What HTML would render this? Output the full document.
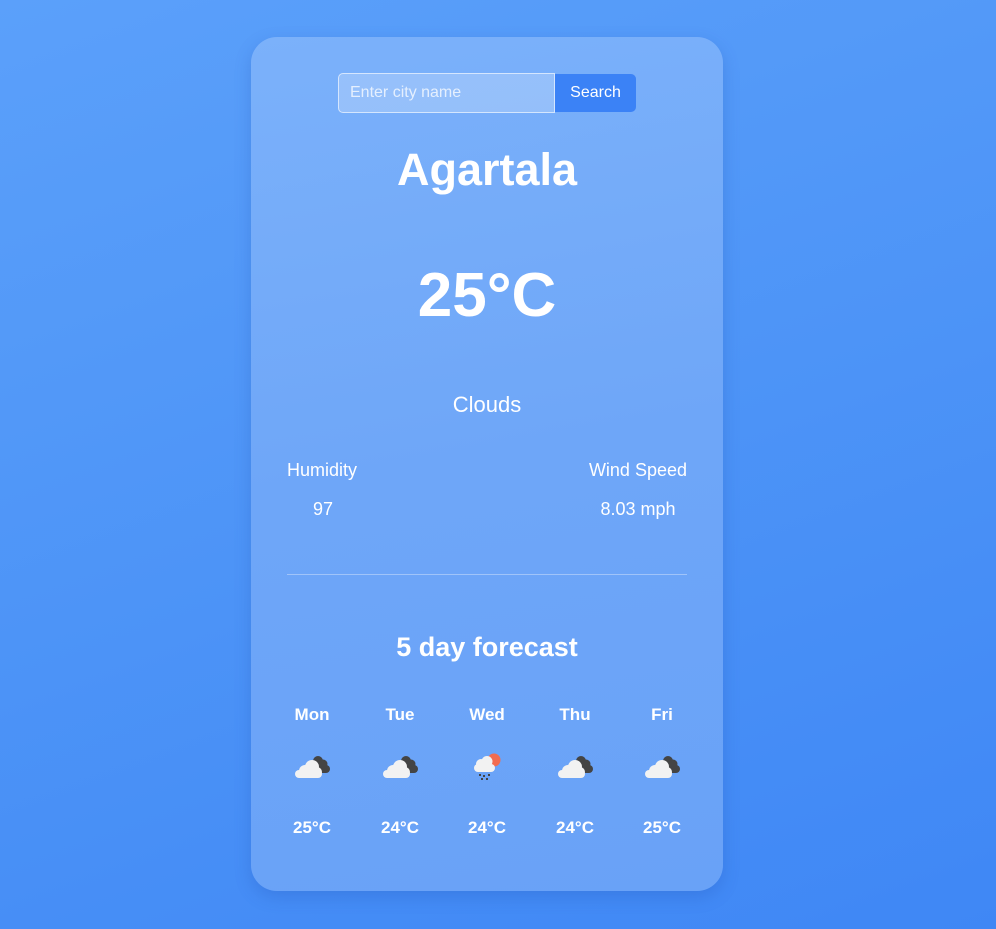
<!DOCTYPE html>
<html><head><style>
html,body{margin:0;padding:0;}
body{width:996px;height:929px;overflow:hidden;background:linear-gradient(160deg,#5ba0fa 0%,#4d94f7 50%,#3f87f5 100%);font-family:"Liberation Sans",Arial,sans-serif;color:#fff;position:relative;}
.card{position:absolute;left:251px;top:37px;width:472px;height:854px;border-radius:26px;background:linear-gradient(170deg,#7bb1fa 0%,#6ea6f8 50%,#69a2f7 100%);box-shadow:0 6px 16px rgba(30,80,180,0.25);}
.a{position:absolute;white-space:nowrap;}
.c{text-align:center;transform:translateX(-50%);}
.inp{position:absolute;left:87px;top:36px;width:217px;height:40px;border:1px solid rgba(255,255,255,0.6);border-radius:5px 0 0 5px;background:rgba(255,255,255,0.22);box-sizing:border-box;font-size:16px;color:rgba(255,255,255,0.75);padding:10px 11px;}
.btn{position:absolute;left:304px;top:37px;width:81px;height:38px;background:#3b82f6;border-radius:0 5px 5px 0;font-size:16px;text-align:center;line-height:37px;}
.day{font-weight:bold;font-size:17px;}
</style></head><body>
<div class="card">
<div class="inp">Enter city name</div>
<div class="btn">Search</div>
<div class="a c" style="left:236px;top:107px;font-size:45px;font-weight:bold;">Agartala</div>
<div class="a c" style="left:236px;top:223px;font-size:62px;font-weight:bold;">25°C</div>
<div class="a c" style="left:236px;top:355px;font-size:22px;">Clouds</div>
<div class="a" style="left:36px;top:423px;font-size:18px;">Humidity</div>
<div class="a c" style="left:72px;top:462px;font-size:18px;">97</div>
<div class="a" style="right:36px;top:423px;font-size:18px;">Wind Speed</div>
<div class="a c" style="left:387px;top:462px;font-size:18px;">8.03 mph</div>
<div class="a" style="left:36px;top:537px;width:400px;height:1px;background:rgba(255,255,255,0.35);"></div>
<div class="a c" style="left:236px;top:595px;font-size:27px;font-weight:bold;">5 day forecast</div>

<div class="a c day" style="left:61px;top:668px;">Mon</div>
<div class="a c day" style="left:149px;top:668px;">Tue</div>
<div class="a c day" style="left:236px;top:668px;">Wed</div>
<div class="a c day" style="left:324px;top:668px;">Thu</div>
<div class="a c day" style="left:411px;top:668px;">Fri</div>

<svg width="0" height="0" style="position:absolute"><defs>
<g id="cl">
<circle cx="24" cy="7" r="5" fill="#444"/><circle cx="29" cy="10" r="4.5" fill="#444"/><circle cx="32" cy="15" r="4" fill="#444"/><rect x="20" y="7" width="12" height="12" fill="#444"/>
<circle cx="11" cy="17" r="6" fill="#f2f2f2"/><circle cx="18" cy="13" r="7" fill="#f2f2f2"/><circle cx="23" cy="18" r="5" fill="#f2f2f2"/><rect x="1" y="16" width="27" height="8" rx="4" fill="#f2f2f2"/>
</g></defs></svg>
<svg class="a" style="left:43px;top:717px" width="38" height="26"><use href="#cl"/></svg>
<svg class="a" style="left:131px;top:717px" width="38" height="26"><use href="#cl"/></svg>
<svg class="a" style="left:306px;top:717px" width="38" height="26"><use href="#cl"/></svg>
<svg class="a" style="left:393px;top:717px" width="38" height="26"><use href="#cl"/></svg>
<svg class="a" style="left:221px;top:714px" width="32" height="34">
<circle cx="22" cy="9" r="6.5" fill="#f26c4f"/>
<circle cx="9" cy="13" r="5" fill="#f2f2f2"/><circle cx="15" cy="10.5" r="5.5" fill="#f2f2f2"/><rect x="2" y="13" width="21" height="8" rx="4" fill="#f2f2f2"/>
<g fill="#444"><rect x="7" y="23" width="2" height="2"/><rect x="11" y="24" width="2" height="2"/><rect x="16" y="23" width="2" height="2"/><rect x="9" y="27" width="2" height="2"/><rect x="14" y="27" width="2" height="2"/></g>
</svg>

<div class="a c day" style="left:61px;top:781px;">25°C</div>
<div class="a c day" style="left:149px;top:781px;">24°C</div>
<div class="a c day" style="left:236px;top:781px;">24°C</div>
<div class="a c day" style="left:324px;top:781px;">24°C</div>
<div class="a c day" style="left:411px;top:781px;">25°C</div>
</div>
</body></html>
